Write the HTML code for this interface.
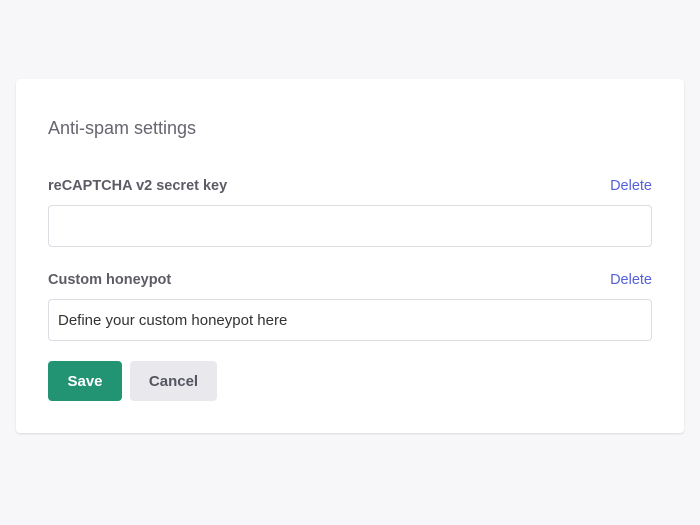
<!DOCTYPE html>
<html><head><style>
body{margin:0;width:700px;height:525px;background:#f7f7f9;font-family:"Liberation Sans",sans-serif;position:relative;overflow:hidden}
.card{position:absolute;left:16px;top:79px;width:668px;height:354px;background:#fff;border-radius:4px;box-shadow:0 1px 2px rgba(0,0,0,.12)}
.t{position:absolute;left:32px;top:39px;font-size:18px;color:#666670}
.l{position:absolute;left:32px;font-size:14.5px;font-weight:bold;color:#5c5c66}
.d{position:absolute;right:32px;font-size:14.5px;color:#5561d8}
.i{position:absolute;left:32px;width:604px;height:42px;border:1px solid #dcdce2;border-radius:4px;box-sizing:border-box;font-size:15px;color:#333;padding:12px 9px}
.b{position:absolute;top:282px;height:40px;border-radius:4px;font-size:15px;font-weight:bold;text-align:center;line-height:42px}
</style></head><body>
<div class="card">
<div class="t">Anti-spam settings</div>
<div class="l" style="top:99px">reCAPTCHA v2 secret key</div>
<div class="d" style="top:99px">Delete</div>
<div class="i" style="top:126px"></div>
<div class="l" style="top:193px">Custom honeypot</div>
<div class="d" style="top:193px">Delete</div>
<div class="i" style="top:220px">Define your custom honeypot here</div>
<div class="b" style="left:32px;width:74px;background:#229474;color:#fff">Save</div>
<div class="b" style="left:114px;width:87px;background:#e8e8ed;color:#555560">Cancel</div>
</div>
</body></html>
